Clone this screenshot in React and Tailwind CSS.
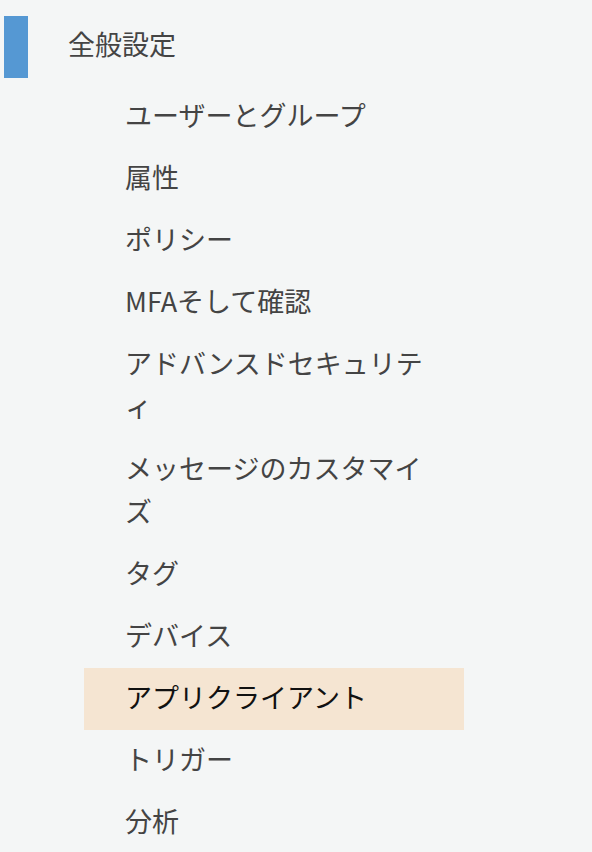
const items = [
  "ユーザーとグループ",
  "属性",
  "ポリシー",
  "MFAそして確認",
  "アドバンスドセキュリティ",
  "メッセージのカスタマイズ",
  "タグ",
  "デバイス",
  "アプリクライアント",
  "トリガー",
  "分析",
];

export default function App() {
  const active = "アプリクライアント";
  return (
    <div
      className="min-h-screen bg-[#f4f6f6] pt-4"
      style={{ fontFamily: '"Noto Sans CJK JP", "Noto Sans", sans-serif' }}
    >
      <div className="flex h-[62px] items-center">
        <div className="ml-1 h-full w-6 bg-[#5598d3]" />
        <span className="ml-10 pb-[5px] text-[27px] text-[#444]">全般設定</span>
      </div>
      <ul className="mt-2 ml-[84px] w-[380px]">
        {items.map((label) => (
          <li
            key={label}
            className={
              label === active
                ? "bg-[#f5e5d2] pt-[7px] pb-[12px] pl-[41px] pr-[29px] text-[27px] leading-[43px] text-[#111]"
                : "pt-[7px] pb-[12px] pl-[41px] pr-[29px] text-[27px] leading-[43px] text-[#444]"
            }
          >
            {label}
          </li>
        ))}
      </ul>
    </div>
  );
}
